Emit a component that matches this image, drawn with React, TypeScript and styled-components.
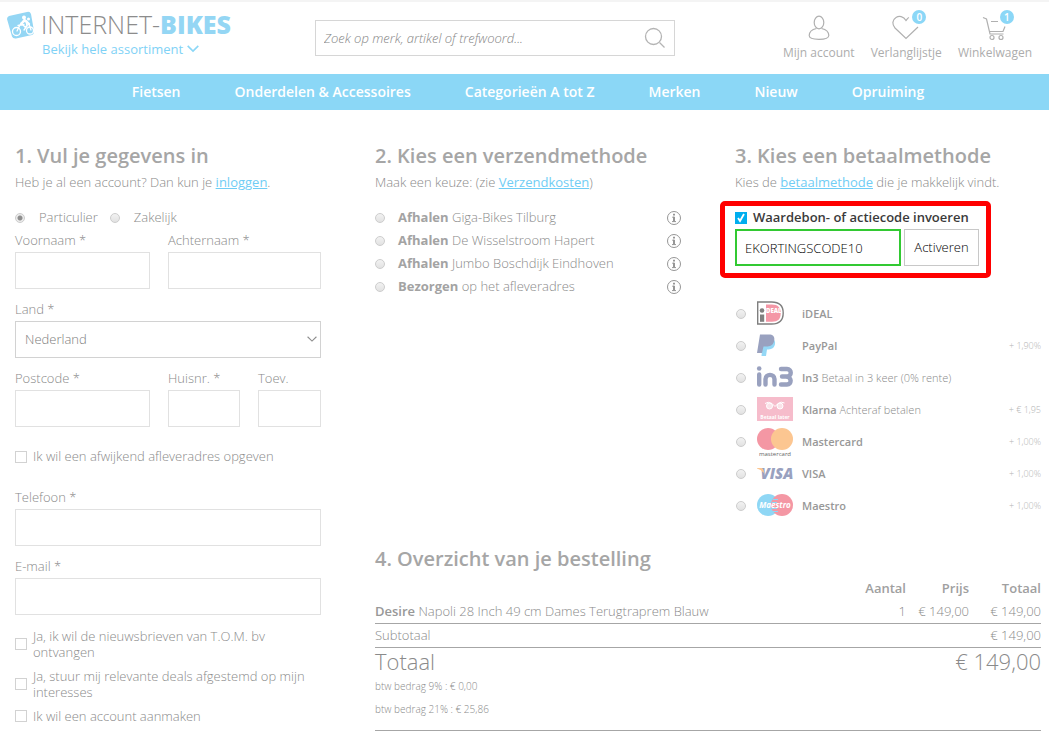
import React from 'react';
import styled, { createGlobalStyle, css } from 'styled-components';

const GlobalStyle = createGlobalStyle`
  *, *::before, *::after { box-sizing: border-box; }
  body {
    margin: 0;
    background: #fff;
    color: #8a8a8a;
    font: 300 13px/23px "Open Sans", sans-serif;
  }
  input, select, button { font: inherit; }
`;

const Page = styled.div`
  border-top: 2px solid #f4f4f4;
`;

const Header = styled.header`
  display: grid;
  grid-template-columns: 301px minmax(200px, 360px) 1fr;
  column-gap: 7px;
  height: 72px;
  padding: 0 17px 0 7px;
`;

const Brand = styled.div`
  display: flex;
  gap: 7px;
  padding-top: 8px;
`;

const BrandText = styled.div`
  display: flex;
  flex-direction: column;
  align-items: flex-start;
`;

const BrandName = styled.a`
  color: #8c8c8c;
  font-size: 25px;
  line-height: 29px;
  text-decoration: none;
  white-space: nowrap;
  strong { color: #94d6f4; font-weight: 800; }
`;

const BrowseButton = styled.button`
  display: flex;
  align-items: center;
  gap: 4px;
  padding: 0 0 0 1px;
  border: 0;
  background: none;
  color: #7fd2f6;
  font-size: 13px;
  font-weight: 400;
  line-height: 20px;
`;

const Search = styled.form`
  display: flex;
  align-items: center;
  height: 36px;
  margin-top: 18px;
  border: 1px solid #d6d6d6;
  input {
    flex: 1;
    min-width: 0;
    padding: 0 8px;
    border: 0;
    outline: 0;
    background: none;
    font-style: italic;
  }
  input::placeholder { color: #858585; opacity: 1; }
  button {
    display: flex;
    padding: 0 8px;
    border: 0;
    background: none;
  }
`;

const Shortcuts = styled.nav`
  display: flex;
  justify-content: flex-end;
  gap: 16px;
  padding-top: 11px;
`;

const Shortcut = styled.a`
  display: flex;
  flex-direction: column;
  align-items: center;
  color: #adadad;
  font-size: 12px;
  font-weight: 400;
  line-height: 20px;
  text-decoration: none;
`;

const IconSlot = styled.span`
  position: relative;
  display: flex;
  height: 30px;
`;

const Badge = styled.span`
  position: absolute;
  top: -3px;
  right: -6px;
  width: 14px;
  height: 14px;
  border-radius: 50%;
  background: #8bd7f7;
  color: #fff;
  font-size: 10px;
  font-weight: 600;
  line-height: 14px;
  text-align: center;
`;

const MainNav = styled.nav`
  display: flex;
  justify-content: center;
  gap: 54px;
  padding-left: 7px;
  background: #8bd7f6;
  a {
    color: #fff;
    font-size: 14px;
    font-weight: 600;
    line-height: 36px;
    text-decoration: none;
    white-space: nowrap;
  }
`;

const Checkout = styled.main`
  display: grid;
  grid-template-columns: repeat(3, minmax(0, 1fr));
  grid-template-rows: auto 1fr;
  column-gap: 54px;
  row-gap: 22px;
  padding: 31px 8px 10px 15px;
`;

const Section = styled.section<{ $place?: 'tall' | 'wide' }>`
  ${p => p.$place === 'tall' && css`grid-row: 1 / 3;`}
  ${p => p.$place === 'wide' && css`grid-column: 2 / 4;`}
`;

const Title = styled.h2`
  margin: 0;
  color: #a6a6a6;
  font-size: 20px;
  font-weight: 600;
  line-height: 30px;
`;

const Intro = styled.p`
  margin: 0;
`;

const Link = styled.a`
  color: #70cdf5;
  font-weight: 400;
`;

const Radio = styled.input.attrs({ type: 'radio' })`
  appearance: none;
  flex: none;
  width: 10px;
  height: 10px;
  margin: 0;
  border: 1px solid #cdcdcd;
  border-radius: 50%;
  background: linear-gradient(#f2f2f2, #e2e2e2);
  &:checked { background: radial-gradient(circle, #8e8e8e 0 2px, #ececec 3px); }
`;

const Checkbox = styled.input.attrs({ type: 'checkbox' })`
  appearance: none;
  flex: none;
  width: 12px;
  height: 12px;
  margin: 0;
  border: 1px solid #d2d2d2;
  background: #fff;
`;

const CheckRow = styled.label<{ $space?: boolean }>`
  display: flex;
  align-items: center;
  gap: 6px;
  line-height: 16px;
  ${p => p.$space && css`margin: 18px 0; line-height: 23px;`}
`;

const CheckList = styled.div`
  display: flex;
  flex-direction: column;
  gap: 8px;
  margin-top: 13px;
`;

const TypeRow = styled.div`
  display: flex;
  gap: 12px;
  margin-top: 12px;
  label { display: flex; align-items: center; gap: 14px; }
`;

const Fields = styled.div<{ $columns: string }>`
  display: grid;
  grid-template-columns: ${p => p.$columns};
  column-gap: 18px;
  & + & { margin-top: 9px; }
`;

const fieldBox = css`
  display: block;
  width: 100%;
  height: 37px;
  padding: 0 9px;
  border: 1px solid #e1e1e1;
  border-radius: 0;
  background: #fff;
  color: inherit;
`;

const TextInput = styled.input`${fieldBox}`;

const SelectWrap = styled.span`
  position: relative;
  display: block;
  select { ${fieldBox} appearance: none; border-color: #d2d2d2; color: #7c7c7c; }
  svg { position: absolute; top: 15px; right: 4px; pointer-events: none; }
`;

const MethodList = styled.div`
  margin-top: 12px;
`;

const Method = styled.div`
  display: flex;
  align-items: center;
  justify-content: space-between;
  label { display: flex; align-items: center; gap: 13px; }
  b { font-weight: 700; color: #a3a3a3; }
`;

const InfoButton = styled.button`
  display: flex;
  padding: 0;
  border: 0;
  background: none;
`;

const Voucher = styled.div`
  width: fit-content;
  margin: 7px 0 20px -15px;
  padding: 0 7px 7px 10px;
  border: 5px solid #f00;
  border-radius: 5px;
`;

const VoucherToggle = styled.label`
  display: flex;
  align-items: center;
  gap: 6px;
  color: #3a3a3a;
  font-weight: 600;
`;

const TickSlot = styled.span`
  position: relative;
  display: flex;
  input:checked { border-color: #00aeef; background: #00aeef; }
  svg { position: absolute; inset: 0; pointer-events: none; }
`;

const VoucherForm = styled.form`
  display: flex;
  gap: 3px;
  input {
    width: 166px;
    height: 37px;
    padding: 0 8px;
    border: 2px solid #32c932;
    outline: 0;
    color: #000;
  }
  button {
    width: 75px;
    padding: 0;
    border: 1px solid #c8c8c8;
    background: #fff;
    color: #000;
  }
`;

const Payment = styled.div`
  display: flex;
  align-items: center;
  justify-content: space-between;
  height: 32px;
  padding-left: 1px;
  font-size: 11px;
  line-height: 22px;
  label { display: flex; align-items: center; }
  label > svg { margin: 0 9px 0 11px; overflow: visible; }
  b { font-weight: 600; color: #989898; }
`;

const Fee = styled.span`
  color: #b4b4b4;
  font-size: 9px;
`;

const Order = styled.table`
  width: 100%;
  margin-top: 3px;
  border-collapse: collapse;
  border-bottom: 1px solid #a6a6a6;
  th, td { padding: 0; text-align: right; white-space: nowrap; }
  th { font-weight: 600; color: #a0a0a0; }
  th:first-child, td:first-child { text-align: left; }
  b { font-weight: 600; color: #989898; }
`;

const Line = styled.tr<{ $ruled?: boolean; $size?: 'large' | 'small' }>`
  ${p => p.$ruled && css`td { border-bottom: 1px solid #a6a6a6; }`}
  ${p => p.$size === 'large' && css`font-size: 22px; line-height: 27px;`}
  ${p => p.$size === 'small' && css`font-size: 10px; &:last-child td { padding-bottom: 9px; }`}
`;

const Chevron = ({ size, color, width }: { size: number; color: string; width: number }) => (
  <svg width={size} height={size * 0.6} viewBox="0 0 12 7" fill="none" stroke={color} strokeWidth={width}>
    <path d="M.7.8 6 6 11.3.8" />
  </svg>
);

const BikeLogo = () => (
  <svg width="27" height="29" viewBox="0 -1 27 29" fill="none">
    <path fill="#94d6f4" d="M2 5 20 1q3-.8 4 2l3 17q0 3-2 4L9 27.500q-3 .5-4-2L0 8q0-2 2-3Z" />
    <g stroke="#fff" strokeWidth="1.300" strokeLinecap="round" strokeLinejoin="round">
      <circle cx="9.500" cy="20.500" r="4" />
      <circle cx="23" cy="19.500" r="3.500" />
      <path d="m10 20 4-8 5-2 1 5-3 4M14 12l4 4 4-3 2 6M11 14.500l6-1" />
      <path strokeWidth="2.400" d="m15 12 2.500-3 2.500 2 2 2" />
    </g>
    <circle cx="17" cy="6.500" r="2" fill="#fff" />
    <circle cx="21.500" cy="8" r="1.500" fill="#fff" />
  </svg>
);

const AccountIcon = () => (
  <svg width="22" height="28" viewBox="0 0 22 28" fill="none" stroke="#b0b0b0" strokeWidth="1.200">
    <ellipse cx="11" cy="9.500" rx="4.800" ry="6.300" />
    <path d="M8.500 15.500C4 16.500 1.200 18.500 1.200 22.500c0 2 3 3.800 9.800 3.800s9.800-1.800 9.800-3.800c0-4-2.800-6-7.300-7" />
  </svg>
);

const HeartIcon = () => (
  <svg width="28" height="28" viewBox="0 0 28 28" fill="none" stroke="#b0b0b0" strokeWidth="1.200">
    <path d="M17 4.500C15.500 5 15 6.500 14 7.500 11.500 3 7 2.500 4 4.500c-4 2.500-4 7-1 10.500l11 10.500L26 14" />
  </svg>
);

const CartIcon = () => (
  <svg width="26" height="28" viewBox="0 0 26 28" fill="none" stroke="#b0b0b0" strokeWidth="1.200">
    <path d="m1 4.500 3.500 1.500 3.500 15h13.500M9 8.500h7M7 18.500h14l2-5" />
    <circle cx="10" cy="24.500" r="2" />
    <circle cx="19" cy="24.500" r="2" />
  </svg>
);

const SearchIcon = () => (
  <svg width="22" height="22" viewBox="0 0 22 22" fill="none" stroke="#b4b4b4" strokeWidth="1.300">
    <circle cx="9.500" cy="9.500" r="8" />
    <path d="m15.500 15.500 5 5" />
  </svg>
);

const InfoIcon = () => (
  <svg width="14" height="14" viewBox="0 0 14 14" fill="none" stroke="#969696">
    <circle cx="7" cy="7" r="6.500" />
    <path strokeWidth="2" d="M7 2.800v1.700M7 5.800v4.700" />
    <path d="M5.200 6.200H7M5 10.600h4" />
  </svg>
);

const Logo: React.FC<{ children: React.ReactNode }> = ({ children }) => (
  <svg width="36" height="28" viewBox="0 0 36 28" fontFamily="Open Sans, sans-serif" aria-hidden="true">
    {children}
  </svg>
);

const logos = {
  ideal: (
    <Logo>
      <path fill="#fff" stroke="#7f7f7f" strokeWidth="1.400" d="M.7 2h14c7.500 0 11.500 4 11.500 11s-4 11-11.500 11H.7Z" />
      <path fill="#f497a6" d="M9 4.600h6c6 0 8.700 3 8.700 8.700S21 21.800 15 21.800H9Z" />
      <circle cx="5" cy="10.500" r="2.300" fill="#7f7f7f" />
      <path fill="#7f7f7f" d="M3 14.500h4.200v7.300H3Z" />
      <text x="9" y="13" fontSize="6" fontWeight="800" fill="#fff">DEAL</text>
    </Logo>
  ),
  paypal: (
    <Logo>
      <path fill="#95d8f6" d="M6 8h11c2 2 1 6-1 8-2 1.500-4 1.500-6 1.500L9 24H4.500Z" />
      <path fill="#99a1bf" d="M3 2.500h9c5 0 6 3 5 7-1 4-4 5-8 5H6.500L5 21H0Z" />
    </Logo>
  ),
  in3: (
    <Logo>
      <g stroke="#99a1bf" strokeWidth="4.400" fill="none" strokeLinecap="round">
        <path d="M2.200 10.500v10M8.500 20.500v-5.500c0-5.500 9-5.500 9 0v5.500M24 5h6c5 0 5 7.500 0 7.500h-5M29 12.500c6 0 6 8 1 8h-6" />
      </g>
      <circle cx="2.200" cy="4.500" r="2.300" fill="#99a1bf" />
    </Logo>
  ),
  klarna: (
    <Logo>
      <path fill="#f6bccb" d="M0 1h36v24H0Z" />
      <g stroke="#fff" fill="#fbe3e9">
        <circle cx="12.500" cy="10" r="3" />
        <circle cx="23" cy="10" r="3" />
        <path fill="none" d="M8 7.500q3-2.500 7 0l3 3 3-3q3-2.500 6.500-.500" />
      </g>
      <text x="18" y="22.500" fontSize="5" fontWeight="700" textAnchor="middle" fill="#fff">Betaal later</text>
    </Logo>
  ),
  mastercard: (
    <Logo>
      <circle cx="11" cy="11" r="11" fill="#f497a4" />
      <circle cx="25" cy="11" r="11" fill="#fcc691" />
      <text x="18" y="28" fontSize="6" fontWeight="400" textAnchor="middle" fill="#666">mastercard</text>
    </Logo>
  ),
  visa: (
    <Logo>
      <text x="20" y="19" fontSize="15" fontWeight="800" fontStyle="italic" textAnchor="middle" fill="#99a1bf">VISA</text>
      <path fill="#fcc691" d="M0 8h4q2 0 2.500 2l1 4Q5 10 0 8.500Z" />
    </Logo>
  ),
  maestro: (
    <Logo>
      <circle cx="11" cy="13" r="11" fill="#8fd7f5" />
      <circle cx="25" cy="13" r="11" fill="#f497a4" />
      <path stroke="#8fd7f5" d="M16 7.500h5M15 10.500h5M15 16.500h5M16 19.500h5" />
      <text x="18" y="15.500" fontSize="8" fontWeight="700" fontStyle="italic" textAnchor="middle" fill="#fff">Maestro</text>
    </Logo>
  ),
};

const menu = ['Fietsen', 'Onderdelen & Accessoires', 'Categorieën A tot Z', 'Merken', 'Nieuw', 'Opruiming'];

const shipping = [
  ['Afhalen', 'Giga-Bikes Tilburg'],
  ['Afhalen', 'De Wisselstroom Hapert'],
  ['Afhalen', 'Jumbo Boschdijk Eindhoven'],
  ['Bezorgen', 'op het afleveradres'],
];

const payments: { id: keyof typeof logos; name: string; note?: string; fee?: string }[] = [
  { id: 'ideal', name: 'iDEAL' },
  { id: 'paypal', name: 'PayPal', fee: '+ 1,90%' },
  { id: 'in3', name: 'In3', note: 'Betaal in 3 keer (0% rente)' },
  { id: 'klarna', name: 'Klarna', note: 'Achteraf betalen', fee: '+ € 1,95' },
  { id: 'mastercard', name: 'Mastercard', fee: '+ 1,00%' },
  { id: 'visa', name: 'VISA', fee: '+ 1,00%' },
  { id: 'maestro', name: 'Maestro', fee: '+ 1,00%' },
];

const Field = ({ label, type = 'text' }: { label: string; type?: string }) => (
  <label>
    {label}
    <TextInput type={type} />
  </label>
);

export default function App() {
  return (
    <Page>
      <GlobalStyle />
      <Header>
        <Brand>
          <BikeLogo />
          <BrandText>
            <BrandName href="#">INTERNET-<strong>BIKES</strong></BrandName>
            <BrowseButton type="button">
              Bekijk hele assortiment <Chevron size={12} color="#8bd7f7" width={1.6} />
            </BrowseButton>
          </BrandText>
        </Brand>
        <Search>
          <input type="text" aria-label="Zoeken" placeholder="Zoek op merk, artikel of trefwoord..." />
          <button type="button" aria-label="Zoek"><SearchIcon /></button>
        </Search>
        <Shortcuts>
          <Shortcut href="#"><IconSlot><AccountIcon /></IconSlot>Mijn account</Shortcut>
          <Shortcut href="#"><IconSlot><HeartIcon /><Badge>0</Badge></IconSlot>Verlanglijstje</Shortcut>
          <Shortcut href="#"><IconSlot><CartIcon /><Badge>1</Badge></IconSlot>Winkelwagen</Shortcut>
        </Shortcuts>
      </Header>
      <MainNav>{menu.map(item => <a key={item} href="#">{item}</a>)}</MainNav>

      <Checkout>
        <Section $place="tall">
          <Title>1. Vul je gegevens in</Title>
          <Intro>Heb je al een account? Dan kun je <Link href="#">inloggen</Link>.</Intro>
          <TypeRow>
            <label><Radio name="type" defaultChecked />Particulier</label>
            <label><Radio name="type" />Zakelijk</label>
          </TypeRow>
          <Fields $columns="135fr 153fr">
            <Field label="Voornaam *" />
            <Field label="Achternaam *" />
          </Fields>
          <Fields $columns="1fr">
            <label>
              Land *
              <SelectWrap>
                <select><option>Nederland</option></select>
                <Chevron size={10} color="#8c8c8c" width={1.3} />
              </SelectWrap>
            </label>
          </Fields>
          <Fields $columns="135fr 72fr 63fr">
            <Field label="Postcode *" />
            <Field label="Huisnr. *" />
            <Field label="Toev." />
          </Fields>
          <CheckRow $space><Checkbox />Ik wil een afwijkend afleveradres opgeven</CheckRow>
          <Fields $columns="1fr"><Field label="Telefoon *" type="tel" /></Fields>
          <Fields $columns="1fr"><Field label="E-mail *" type="email" /></Fields>
          <CheckList>
            <CheckRow><Checkbox />Ja, ik wil de nieuwsbrieven van T.O.M. bv ontvangen</CheckRow>
            <CheckRow><Checkbox />Ja, stuur mij relevante deals afgestemd op mijn interesses</CheckRow>
            <CheckRow><Checkbox />Ik wil een account aanmaken</CheckRow>
          </CheckList>
        </Section>

        <Section>
          <Title>2. Kies een verzendmethode</Title>
          <Intro>Maak een keuze: (zie <Link href="#">Verzendkosten</Link>)</Intro>
          <MethodList>
            {shipping.map(([kind, place]) => (
              <Method key={place}>
                <label><Radio name="shipping" /><span><b>{kind}</b> {place}</span></label>
                <InfoButton type="button" aria-label={`Informatie over ${place}`}><InfoIcon /></InfoButton>
              </Method>
            ))}
          </MethodList>
        </Section>

        <Section>
          <Title>3. Kies een betaalmethode</Title>
          <Intro>Kies de <Link href="#">betaalmethode</Link> die je makkelijk vindt.</Intro>
          <Voucher>
            <VoucherToggle>
              <TickSlot>
                <Checkbox defaultChecked />
                <svg width="12" height="12" viewBox="0 0 12 12" fill="none" stroke="#fff" strokeWidth="1.800">
                  <path d="m3 6 2 3 4-7" />
                </svg>
              </TickSlot>
              Waardebon- of actiecode invoeren
            </VoucherToggle>
            <VoucherForm>
              <input type="text" aria-label="Actiecode" defaultValue="EKORTINGSCODE10" />
              <button type="button">Activeren</button>
            </VoucherForm>
          </Voucher>
          {payments.map(({ id, name, note, fee }) => (
            <Payment key={id}>
              <label><Radio name="payment" />{logos[id]}<span><b>{name}</b> {note}</span></label>
              {fee && <Fee>{fee}</Fee>}
            </Payment>
          ))}
        </Section>

        <Section $place="wide">
          <Title>4. Overzicht van je bestelling</Title>
          <Order>
            <colgroup>
              <col />
              <col width="63" />
              <col width="63" />
              <col width="72" />
            </colgroup>
            <thead>
              <tr><th aria-label="Artikel" /><th>Aantal</th><th>Prijs</th><th>Totaal</th></tr>
            </thead>
            <tbody>
              <Line $ruled>
                <td><b>Desire</b> Napoli 28 Inch 49 cm Dames Terugtraprem Blauw</td>
                <td>1</td><td>€ 149,00</td><td>€ 149,00</td>
              </Line>
              <Line $ruled><td colSpan={3}>Subtotaal</td><td>€ 149,00</td></Line>
              <Line $size="large"><td colSpan={2}>Totaal</td><td colSpan={2}>€ 149,00</td></Line>
              <Line $size="small"><td colSpan={4}>btw bedrag 9% : € 0,00</td></Line>
              <Line $size="small"><td colSpan={4}>btw bedrag 21% : € 25,86</td></Line>
            </tbody>
          </Order>
        </Section>
      </Checkout>
    </Page>
  );
}
